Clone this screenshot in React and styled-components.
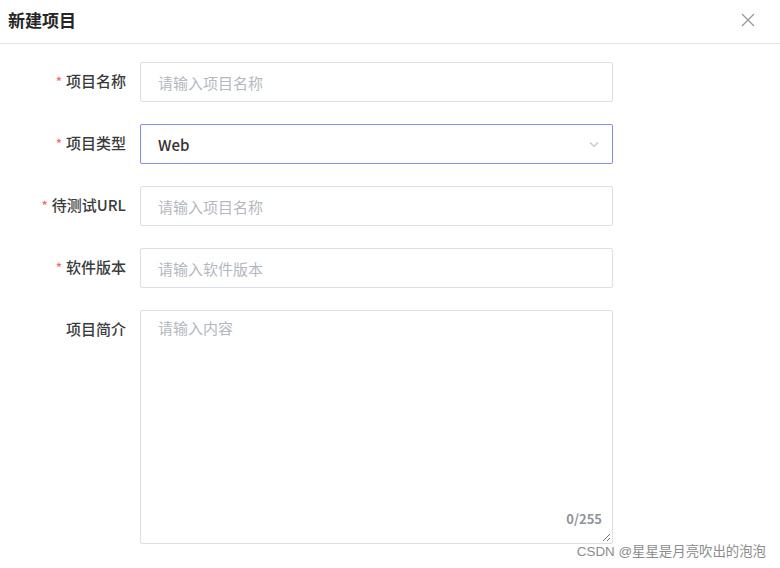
import React from 'react';
import styled, { createGlobalStyle } from 'styled-components';

const GlobalStyle = createGlobalStyle`
  body {
    margin: 0;
    background: #fff;
    font-family: "Noto Sans CJK SC", "Liberation Sans", sans-serif;
  }
`;

const Page = styled.div`
  position: relative;
  width: 780px;
  height: 568px;
  overflow: hidden;
  background: #fff;
`;

const Header = styled.div`
  height: 43px;
  display: flex;
  align-items: center;
  justify-content: space-between;
  padding: 0 24px 0 8px;
  border-bottom: 1px solid #e6e6e6;
`;

const Title = styled.h3`
  margin: 0;
  font-size: 17px;
  font-weight: 700;
  color: #262626;
  padding-bottom: 4px;
`;

const Close = styled.button`
  border: 0;
  background: none;
  padding: 0;
  width: 16px;
  height: 16px;
  display: flex;
  margin-bottom: 4px;
  svg {
    width: 16px;
    height: 16px;
    stroke: #999;
  }
`;

const Form = styled.div`
  display: flex;
  flex-direction: column;
  gap: 22px;
  padding-top: 18px;
`;

const Row = styled.div`
  display: flex;
  align-items: flex-start;
`;

const Label = styled.div`
  width: 126px;
  margin-right: 14px;
  text-align: right;
  font-size: 15px;
  color: #3a3b3d;
  line-height: 38px;
  font-weight: 500;
`;

const Star = styled.span`
  color: #f56c6c;
  margin-right: 4px;
  font-size: 13px;
`;

const Field = styled.div`
  position: relative;
  box-sizing: border-box;
  width: 473px;
  height: ${p => p.tall ? '234px' : '40px'};
  border: 1px solid ${p => p.active ? '#7f8fe6' : '#dcdfe6'};
  border-radius: 2px;
  padding: ${p => p.tall ? '6px 17px' : '0 17px'};
  display: flex;
  align-items: ${p => p.tall ? 'flex-start' : 'center'};
  justify-content: space-between;
  font-size: 15px;
  color: ${p => p.placeholder ? '#b4b8bf' : '#333'};
  font-weight: ${p => p.placeholder ? 400 : 500};
`;

const Chevron = styled.svg`
  width: 12px;
  height: 12px;
  margin-right: -5px;
  stroke: #c0c4cc;
  fill: none;
`;

const Count = styled.span`
  position: absolute;
  right: 10px;
  bottom: 15px;
  font-size: 13px;
  font-weight: 700;
  color: #909399;
`;

const Resize = styled.svg`
  position: absolute;
  right: 1px;
  bottom: 1px;
  width: 9px;
  height: 9px;
  stroke: #777;
`;

const Watermark = styled.div`
  position: absolute;
  right: 14px;
  bottom: 8px;
  font-size: 13.4px;
  color: #8c8c8c;
  font-family: "Liberation Sans", "Noto Sans CJK SC", sans-serif;
`;

const rows = [
  { label: '项目名称', required: true, text: '请输入项目名称', placeholder: true },
  { label: '项目类型', required: true, text: 'Web', select: true },
  { label: '待测试URL', required: true, text: '请输入项目名称', placeholder: true },
  { label: '软件版本', required: true, text: '请输入软件版本', placeholder: true },
];

export default function App() {
  return (
    <Page>
      <GlobalStyle />
      <Header>
        <Title>新建项目</Title>
        <Close>
          <svg viewBox="0 0 16 16"><path d="M2 2l12 12M14 2L2 14" strokeWidth="1.3" /></svg>
        </Close>
      </Header>
      <Form>
        {rows.map(r => (
          <Row key={r.label}>
            <Label>{r.required && <Star>*</Star>}{r.label}</Label>
            <Field placeholder={r.placeholder} active={r.select}>
              {r.text}
              {r.select && (
                <Chevron viewBox="0 0 12 12"><path d="M2 4.5l4 4 4-4" strokeWidth="1.2" /></Chevron>
              )}
            </Field>
          </Row>
        ))}
        <Row>
          <Label>项目简介</Label>
          <Field tall placeholder>
            请输入内容
            <Count>0/255</Count>
            <Resize viewBox="0 0 9 9"><path d="M8 1L1 8M8 5L5 8" strokeWidth="1" /></Resize>
          </Field>
        </Row>
      </Form>
      <Watermark>CSDN @星星是月亮吹出的泡泡</Watermark>
    </Page>
  );
}
